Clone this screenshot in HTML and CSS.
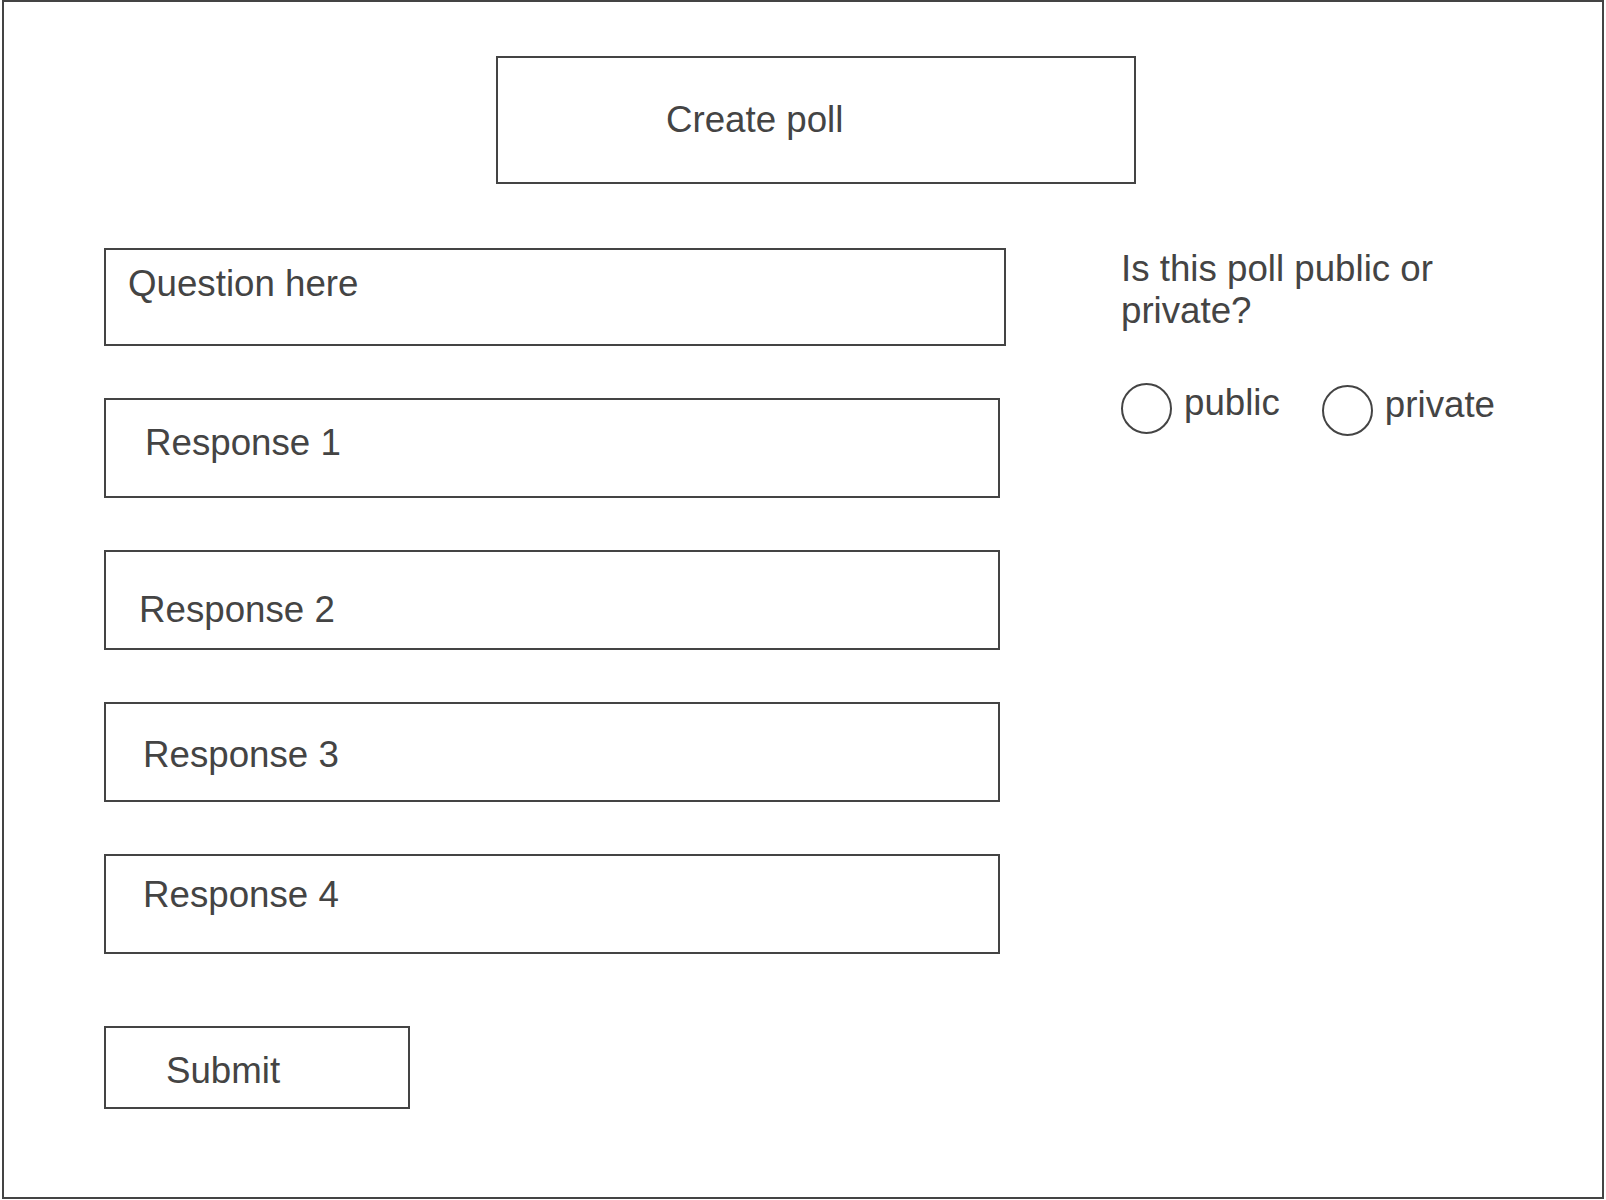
FILE: index.html
```html
<!DOCTYPE html>
<html lang="en">
<head>
<meta charset="utf-8">
<title>Create poll</title>
<link rel="stylesheet" href="styles.css">
</head>
<body>
<div class="frame">
  <header class="header">
    <div class="box title-box">Create poll</div>
  </header>
  <main class="main">
    <section class="form-col">
      <div class="box question">Question here</div>
      <div class="box response r1">Response 1</div>
      <div class="box response r2">Response 2</div>
      <div class="box response r3">Response 3</div>
      <div class="box response r4">Response 4</div>
      <div class="box submit">Submit</div>
    </section>
    <aside class="side-col">
      <p class="side-heading">Is this poll public or private?</p>
      <div class="radio-row">
        <div class="radio-item">
          <span class="radio"></span>
          <span class="radio-label">public</span>
        </div>
        <div class="radio-item radio-item-second">
          <span class="radio"></span>
          <span class="radio-label">private</span>
        </div>
      </div>
    </aside>
  </main>
</div>
</body>
</html>
```
FILE: styles.css
```css
* {
  box-sizing: border-box;
}

html, body {
  margin: 0;
  padding: 0;
  background: #ffffff;
}

body {
  font-family: "Liberation Sans", Arial, sans-serif;
  font-size: 36.7px;
  line-height: 40px;
  color: #444444;
}

.frame {
  margin-left: 2px;
  width: 1602px;
  height: 1199px;
  border: 2px solid #444444;
  display: flex;
  flex-direction: column;
}

.box {
  border: 2px solid #444444;
  background: #ffffff;
}

.header {
  padding-top: 54px;
  padding-left: 492px;
}

.title-box {
  width: 640px;
  height: 128px;
  padding-top: 42px;
  padding-left: 168px;
}

.main {
  display: flex;
  margin-top: 64px;
  padding-left: 100px;
}

.form-col {
  display: flex;
  flex-direction: column;
  gap: 52px;
  width: 902px;
}

.question {
  width: 902px;
  height: 98px;
  padding-top: 14px;
  padding-left: 22px;
}

.response {
  width: 896px;
  height: 100px;
}

.r1 {
  padding-top: 23px;
  padding-left: 39px;
}

.r2 {
  padding-top: 38px;
  padding-left: 33px;
}

.r3 {
  padding-top: 31px;
  padding-left: 37px;
}

.r4 {
  padding-top: 19px;
  padding-left: 37px;
}

.submit {
  margin-top: 20px;
  width: 306px;
  height: 83px;
  padding-top: 23px;
  padding-left: 60px;
}

.side-col {
  margin-left: 115px;
  width: 380px;
}

.side-heading {
  margin: 0;
  line-height: 42px;
  width: 350px;
}

.radio-row {
  display: flex;
  margin-top: 51px;
  gap: 42px;
}

.radio-item {
  display: flex;
  align-items: flex-start;
  gap: 12px;
}

.radio-item-second {
  margin-top: 2px;
}

.radio {
  display: block;
  width: 51px;
  height: 51px;
  border: 2px solid #444444;
  border-radius: 50%;
}

.radio-label {
  display: block;
}
```
